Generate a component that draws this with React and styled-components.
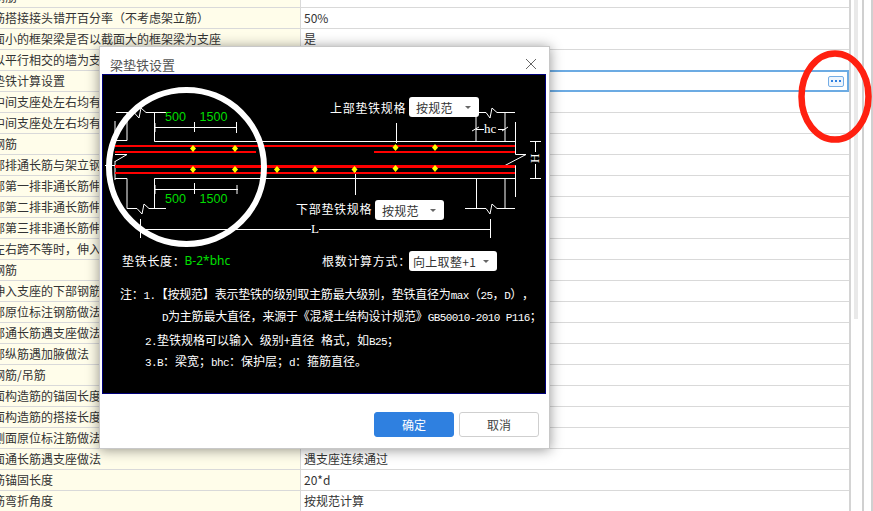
import React from 'react';
import styled, { createGlobalStyle } from 'styled-components';

const GlobalStyle = createGlobalStyle`
  html, body {
    margin: 0;
    padding: 0;
    width: 873px;
    height: 511px;
    overflow: hidden;
    background: #fff;
    font-family: "Noto Sans CJK SC", "Noto Sans", sans-serif;
    text-spacing-trim: space-all;
  }
`;

const Page = styled.div`
  position: relative;
  width: 873px;
  height: 511px;
  display: flex;
  overflow: hidden;
`;

const Grid = styled.div`
  width: 849px;
  height: 511px;
  flex: none;
  border-right: 2px solid #d4d4d4;
  overflow: hidden;
`;

const Rows = styled.div`
  margin-top: -13px;
`;

const Row = styled.div`
  display: flex;
  height: 20px;
  border-bottom: 1px solid #d9d9d9;
  font-size: 12px;
  line-height: 20px;
  color: #333;
`;

const NameCell = styled.div`
  width: 301px;
  flex: none;
  box-sizing: border-box;
  border-right: 1px solid #d9d9d9;
  background: #fffdea;
  overflow: hidden;
  white-space: nowrap;
  text-indent: -7px;
`;

const ValueCell = styled.div`
  flex: 1;
  box-sizing: border-box;
  display: flex;
  align-items: center;
  padding: 0 3px;
  margin: ${(p) => (p.$active ? '-1px 0' : '0')};
  height: ${(p) => (p.$active ? '22px' : '20px')};
  border: ${(p) => (p.$active ? '2px solid #6cabe3' : 'none')};
  background: #fff;
`;

const MoreButton = styled.span`
  width: 16px;
  height: 11px;
  margin-left: auto;
  box-sizing: border-box;
  border: 1px solid #74ade6;
  border-radius: 2px;
  background: #eef5fd;
  display: flex;
  align-items: center;
  justify-content: center;
`;

const ScrollTrack = styled.div`
  width: 13px;
  flex: none;
  box-sizing: border-box;
  border-right: 2px solid #d0d0d0;
  padding-left: 3px;
`;

const ScrollThumb = styled.div`
  width: 4px;
  height: 319px;
  background: #e9e9e9;
`;

const Gutter = styled.div`
  width: 9px;
  flex: none;
  box-sizing: border-box;
  border-right: 2px solid #d0d0d0;
`;

const Dialog = styled.div`
  position: absolute;
  left: 99px;
  top: 46px;
  width: 451px;
  height: 403px;
  box-sizing: border-box;
  background: #fff;
  border: 1px solid #c8c8c8;
  box-shadow: 0 1px 12px rgba(0, 0, 0, 0.42);
  display: flex;
  flex-direction: column;
`;

const DialogHeader = styled.div`
  height: 27px;
  flex: none;
  padding: 0 12px 0 10px;
  display: flex;
  align-items: flex-end;
  justify-content: space-between;
  font-size: 13px;
  line-height: 18px;
  color: #555;
`;

const CloseIcon = styled.svg`
  width: 12px;
  height: 12px;
  margin-bottom: 4px;
`;

const Panel = styled.div`
  position: relative;
  width: 444px;
  height: 320px;
  margin-left: 2px;
  box-sizing: border-box;
  flex: none;
  border: 1px solid #00007a;
  background: #000;
  color: #fff;
`;

const Drawing = styled.svg`
  position: absolute;
  left: -1px;
  top: -1px;
  width: 444px;
  height: 320px;
`;

const Canvas = styled.div`
  position: relative;
  height: 208px;
`;

const CanvasItem = styled.div`
  position: absolute;
  left: ${(p) => p.$x}px;
  top: ${(p) => p.$y}px;
  height: 20px;
  display: flex;
  align-items: center;
  font-size: 12px;
  line-height: 20px;
  letter-spacing: 0.7px;
  white-space: nowrap;
`;

const GreenText = styled.span`
  margin-left: -1px;
  color: #00e000;
  font-family: "Noto Sans", sans-serif;
  letter-spacing: 0;
`;

const Select = styled.div`
  position: absolute;
  left: ${(p) => p.$x}px;
  top: ${(p) => p.$y}px;
  width: ${(p) => p.$w}px;
  height: 20px;
  box-sizing: border-box;
  padding: 0 8px 0 ${(p) => p.$pad || 7}px;
  background: #fff;
  border-radius: 3px;
  display: flex;
  align-items: center;
  justify-content: space-between;
  font-size: 12px;
  letter-spacing: 0.3px;
  color: #333;
`;

const Caret = styled.i`
  width: 0;
  height: 0;
  border-left: 3px solid transparent;
  border-right: 3px solid transparent;
  border-top: 3px solid #666;
`;

const Notes = styled.div`
  position: relative;
  font-size: 12px;
  white-space: nowrap;
`;

const Note = styled.div`
  height: 22px;
  line-height: 22px;
  margin-left: ${(p) => p.$indent}px;
  margin-top: ${(p) => p.$gap || 0}px;
  letter-spacing: ${(p) => (p.$tight ? '-0.2px' : '0')};
  word-spacing: ${(p) => (p.$wide ? '4px' : '0')};
`;

const Latin = styled.span`
  font-family: "Liberation Mono", monospace;
  font-size: 11px;
  line-height: 0;
  letter-spacing: -0.6px;
`;

const Footer = styled.div`
  display: flex;
  justify-content: flex-end;
  gap: 5px;
  padding: 18px 10px 0 0;
`;

const Button = styled.button`
  width: 80px;
  height: 25px;
  padding: 0;
  box-sizing: border-box;
  border-radius: 3px;
  border: 1px solid ${(p) => (p.$primary ? '#2f80e0' : '#cfcfcf')};
  background: ${(p) => (p.$primary ? '#2f80e0' : '#fff')};
  color: ${(p) => (p.$primary ? '#fff' : '#444')};
  font-family: inherit;
  font-size: 12px;
`;

const RedRing = styled.svg`
  position: absolute;
  left: 795px;
  top: 47px;
  width: 78px;
  height: 100px;
`;

const rows = [
  ['钢筋', ''],
  ['筋搭接接头错开百分率（不考虑架立筋）', '50%'],
  ['面小的框架梁是否以截面大的框架梁为支座', '是'],
  ['以平行相交的墙为支座', ''],
  ['垫铁计算设置', '', true],
  ['中间支座处左右均有负筋', ''],
  ['中间支座处左右均有加腋', ''],
  ['钢筋', ''],
  ['部排通长筋与架立钢筋', ''],
  ['部第一排非通长筋伸入', ''],
  ['部第二排非通长筋伸入', ''],
  ['部第三排非通长筋伸入', ''],
  ['左右跨不等时，伸入', ''],
  ['钢筋', ''],
  ['伸入支座的下部钢筋', ''],
  ['部原位标注钢筋做法', ''],
  ['部通长筋遇支座做法', ''],
  ['部纵筋遇加腋做法', ''],
  ['钢筋/吊筋', ''],
  ['面构造筋的锚固长度', ''],
  ['面构造筋的搭接长度', ''],
  ['侧面原位标注筋做法', ''],
  ['面通长筋遇支座做法', '遇支座连续通过'],
  ['筋锚固长度', '20*d'],
  ['筋弯折角度', '按规范计算'],
];

const whiteLines = [
  'M116 112.5H127V140.5H115V121',
  'M127 112.5H134L139 118L141 108L146 112.5H166',
  'M154.5 112.5V141.5H515',
  'M154.5 127.5H236M155 123V132M194.5 122V132M236.5 122V133',
  'M115 178.5H127V208.5H137L142 214L144 204L149 208.5H166',
  'M154.5 208.5V178.5H515',
  'M154.5 189.5H238M155 185V194M194.5 183V194M237 185V194',
  'M115 161V180M105 165.5H115M115 161.5L127 154.5H115',
  'M140.5 219V238M140 229.5H311M319 229.5H490M490.5 219V238',
  'M515.5 122V154.5H526L505 165.5H515.5V197',
  'M479 112.5H486L490 118L492 108L497 112.5H515',
  'M476 112V141M505 112V141',
  'M476 129.5H484M498 129.5H505M472 131L479 127M502 131L508 127',
  'M465 208.5H486L490 214L492 204L497 208.5H515',
  'M476.5 178V208M505 178V208',
  'M535.5 141.5V152M535.5 164V178.5M530 141.5H541M530 178.5H541',
  'M396.5 123V143M355.5 168V195',
];

const dots = [
  [193, 148.5], [235, 148.5], [395.5, 147.5], [435, 147.5],
  [193, 169.5], [235, 169.5], [277, 169.5], [315, 169.5],
  [354.5, 169.5], [395.5, 168.5], [435, 168.5],
];

const dims = [
  ['500', 165, 120.5, 21], ['1500', 199.5, 120.5, 28],
  ['500', 165, 202.5, 21], ['1500', 199.5, 202.5, 28],
];

const BeamDrawing = () => (
  <Drawing viewBox="102 74 444 320">
    <g fill="none" stroke="#fff" strokeWidth="1">
      {whiteLines.map((d) => <path key={d} d={d} />)}
    </g>
    <g stroke="#f00" fill="none">
      <path d="M115 146H515" strokeWidth="2" />
      <path d="M115 152H256M374 152H515" strokeWidth="2" />
      <path d="M115 166.5H515" strokeWidth="3" />
      <path d="M115 173H515" strokeWidth="2" />
    </g>
    {dots.map(([x, y]) => (
      <path key={`${x}-${y}`} d={`M${x} ${y - 3.5}L${x + 3} ${y}L${x} ${y + 3.5}L${x - 3} ${y}Z`} fill="#ff0" />
    ))}
    <g fill="#00dd00" fontFamily="Liberation Sans, sans-serif" fontSize="13">
      {dims.map(([t, x, y, w]) => (
        <text key={`${t}-${y}`} x={x} y={y} textLength={w} lengthAdjust="spacingAndGlyphs">{t}</text>
      ))}
    </g>
    <g fill="#fff" fontFamily="Liberation Serif, serif" fontSize="13">
      <text x="484" y="133">hc</text>
      <text x="311" y="233">L</text>
      <text x="0" y="0" transform="translate(539 163) rotate(-90)">H</text>
    </g>
    <ellipse cx="186.5" cy="167" rx="77.5" ry="77" fill="none" stroke="#fff" strokeWidth="6" />
  </Drawing>
);

export default function App() {
  return (
    <Page>
      <GlobalStyle />
      <Grid>
        <Rows>
          {rows.map(([name, value, active], i) => (
            <Row key={i}>
              <NameCell>{name}</NameCell>
              <ValueCell $active={active}>
                {value}
                {active && (
                  <MoreButton>
                    <svg width="10" height="3" viewBox="0 0 10 3">
                      <path d="M0 0h2v2H0zM4 0h2v2H4zM8 0h2v2H8z" fill="#2f80e0" />
                    </svg>
                  </MoreButton>
                )}
              </ValueCell>
            </Row>
          ))}
        </Rows>
      </Grid>
      <ScrollTrack><ScrollThumb /></ScrollTrack>
      <Gutter />

      <RedRing viewBox="0 0 78 100">
        <ellipse cx="40" cy="49.5" rx="33.5" ry="43" fill="none" stroke="#ff2010" strokeWidth="6.5" />
      </RedRing>

      <Dialog>
        <DialogHeader>
          梁垫铁设置
          <CloseIcon viewBox="0 0 12 12">
            <path d="M1 1L11 11M11 1L1 11" stroke="#666" strokeWidth="1" fill="none" />
          </CloseIcon>
        </DialogHeader>
        <Panel>
          <BeamDrawing />
          <Canvas>
            <CanvasItem $x={227} $y={23}>上部垫铁规格</CanvasItem>
            <Select $x={306} $y={22} $w={70}>按规范<Caret /></Select>
            <CanvasItem $x={193} $y={124}>下部垫铁规格</CanvasItem>
            <Select $x={272} $y={125} $w={69}>按规范<Caret /></Select>
            <CanvasItem $x={19} $y={176}>垫铁长度：<GreenText>B-2*bhc</GreenText></CanvasItem>
            <CanvasItem $x={219} $y={176}>根数计算方式：</CanvasItem>
            <Select $x={306} $y={176} $w={88} $pad={4}>向上取整+1<Caret /></Select>
          </Canvas>
          <Notes>
            <Note $indent={17} $tight>注：<Latin>1.</Latin>【按规范】表示垫铁的级别取主筋最大级别，垫铁直径为<Latin>max</Latin>（<Latin>25</Latin>，<Latin>D</Latin>），</Note>
            <Note $indent={59} $tight>
              <Latin>D</Latin>为主筋最大直径，来源于《混凝土结构设计规范》<Latin>GB50010-2010 P116</Latin>；
            </Note>
            <Note $indent={42} $gap={2} $wide><Latin>2.</Latin>垫铁规格可以输入 级别+直径 格式，如<Latin>B25</Latin>；</Note>
            <Note $indent={42} $gap={-1}><Latin>3.B</Latin>：梁宽；<Latin>bhc</Latin>：保护层；<Latin>d</Latin>：箍筋直径。</Note>
          </Notes>
        </Panel>
        <Footer>
          <Button $primary>确定</Button>
          <Button>取消</Button>
        </Footer>
      </Dialog>
    </Page>
  );
}
